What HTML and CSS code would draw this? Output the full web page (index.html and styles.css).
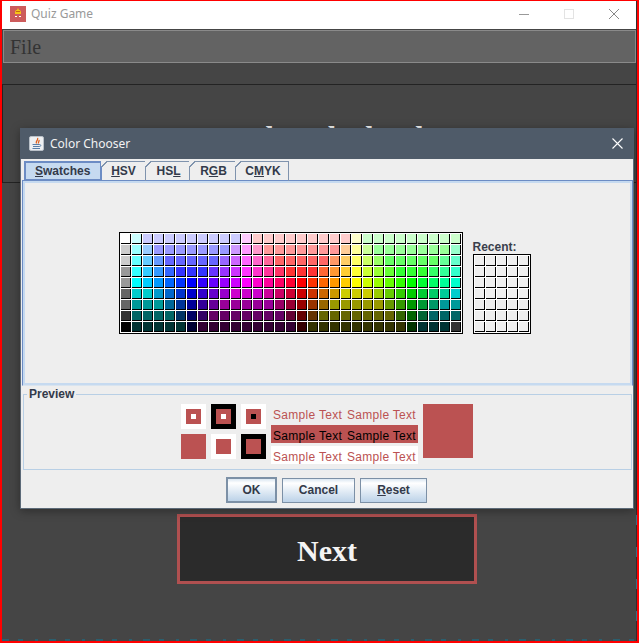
FILE: index.html
```html
<!DOCTYPE html>
<html lang="en">
<head>
    <meta charset="UTF-8">
    <title>Quiz Game</title>
    <link rel="stylesheet" href="styles.css">
</head>
<body>
<div class="screen">
    <div class="window">
        <div class="titlebar">
            <svg class="app_icon" width="16" height="16" viewBox="0 0 16 16">
                <rect width="16" height="16" fill="#cd5c5c"/>
                <path d="M5 6 L6 4 L7 4 L8 2 L9 4 L10 4 L11 6 L11 8 L5 8 Z" fill="#f5c518"/>
                <rect x="6" y="5" width="4" height="1" fill="#c46a10"/>
                <rect x="5" y="10" width="2" height="1" fill="#fff"/>
                <rect x="9" y="10" width="2" height="1" fill="#fff"/>
            </svg>
            <span class="app_name">Quiz Game</span>
            <div class="win_buttons">
                <svg width="12" height="12" viewBox="0 0 12 12"><path d="M1 6.5 H11" stroke="#999" fill="none"/></svg>
                <svg width="12" height="12" viewBox="0 0 12 12"><rect x="1.5" y="1.5" width="9" height="9" stroke="#e3e3e3" fill="none"/></svg>
                <svg width="12" height="12" viewBox="0 0 12 12"><path d="M1 1 L11 11 M11 1 L1 11" stroke="#888" fill="none"/></svg>
            </div>
        </div>
        <div class="menubar"><span class="menu_item">File</span></div>
        <div class="level_panel">
            <h1 class="level_title">Select the level</h1>
        </div>
        <div class="next_row">
            <button class="next_btn" type="button">Next</button>
        </div>
        <div class="clipped_bottom"></div>
        <div class="clipped_right"></div>
    </div>

    <div class="dialog">
        <div class="dialog_title">
            <svg class="java_icon" width="15" height="15" viewBox="0 0 15 15">
                <rect x="0.5" y="0.5" width="14" height="14" rx="1.5" fill="#eef0f2" stroke="#b9c0c8"/>
                <path d="M8.5 2 C10 4 6 5 7.5 7.5 M10 4 C10.5 5.5 9 6 9.5 7.5" stroke="#e0601c" stroke-width="1.3" fill="none"/>
                <path d="M3.5 8.5 H10 M4 10.5 H10 M3.5 12.5 H11 M10 8.5 C12.5 8.5 12.5 10.5 10 10.5" stroke="#5a7fa8" fill="none"/>
            </svg>
            <span class="dialog_name">Color Chooser</span>
            <svg class="dialog_close" width="11" height="11" viewBox="0 0 11 11"><path d="M0.5 0.5 L10.5 10.5 M10.5 0.5 L0.5 10.5" stroke="#fff" stroke-width="1.1" fill="none"/></svg>
        </div>
        <div class="tabs">
            <div class="tab tab_selected"><u>S</u>watches</div>
            <div class="tab tab_hsv"><u>H</u>SV</div>
            <div class="tab tab_hsl">HS<u>L</u></div>
            <div class="tab tab_rgb">R<u>G</u>B</div>
            <div class="tab tab_cmyk">C<u>M</u>YK</div>
        </div>
        <div class="tab_panel">
            <div class="swatch_area">
                <div class="swatch_grid" id="main_swatches"></div>
                <div class="recent">
                    <div class="recent_label">Recent:</div>
                    <div class="swatch_grid recent_grid" id="recent_swatches"></div>
                </div>
            </div>
        </div>
        <fieldset class="preview">
            <legend>Preview</legend>
            <div class="preview_row">
                <div class="chips">
                    <div class="chip chip_white"><div class="chip_in"><div class="chip_dot"></div></div></div>
                    <div class="chip chip_black"><div class="chip_in"><div class="chip_dot"></div></div></div>
                    <div class="chip chip_white"><div class="chip_in"><div class="chip_dot dot_black"></div></div></div>
                    <div class="chip chip_solid"></div>
                    <div class="chip chip_white"><div class="chip_in"></div></div>
                    <div class="chip chip_black"><div class="chip_in"></div></div>
                </div>
                <div class="samples">
                    <div class="sample"><span>Sample Text</span><span>Sample Text</span></div>
                    <div class="sample sample_fill"><span>Sample Text</span><span>Sample Text</span></div>
                    <div class="sample sample_white"><span>Sample Text</span><span>Sample Text</span></div>
                </div>
                <div class="big_color"></div>
            </div>
        </fieldset>
        <div class="dialog_buttons">
            <button class="btn btn_default" type="button">OK</button>
            <button class="btn btn_cancel" type="button">Cancel</button>
            <button class="btn btn_reset" type="button"><u>R</u>eset</button>
        </div>
    </div>
</div>
<script src="script.js"></script>
</body>
</html>
```

FILE: styles.css
```css
* {
    box-sizing: border-box;
}
body {
    margin: 0;
    background-color: #454545;
}
.screen {
    position: relative;
    width: 639px;
    height: 643px;
    overflow: hidden;
    border-style: solid;
    border-color: red;
    border-width: 1px 2px 2px 2px;
}
.window {
    position: relative;
    display: flex;
    flex-direction: column;
    height: 100%;
    background-color: #454545;
    border-right: 1px solid #2e2e2e;
}

/* window title */
.titlebar {
    display: flex;
    align-items: center;
    height: 28px;
    padding: 0 0 3px 8px;
    background-color: white;
    font-family: "Noto Sans", sans-serif;
    font-size: 12px;
}
.app_name {
    margin-left: 5px;
    color: #999;
}
.win_buttons {
    display: flex;
    gap: 33px;
    margin-left: auto;
    margin-right: 16px;
}

/* menu */
.menubar {
    display: flex;
    align-items: center;
    height: 33px;
    margin: 1px 0 0 1px;
    padding: 2px 0 0 6px;
    background-color: #636363;
    border: 1px solid #8a8a8a;
}
.menu_item {
    font-family: "Liberation Serif", serif;
    font-size: 20px;
    color: #333;
}

/* stuff under the dialog */
.level_panel {
    height: 99px;
    margin-top: 21px;
    padding: 32px 0 0 20px;
    border: 1px solid #232323;
    border-right: 0;
    text-align: center;
}
.level_title {
    margin: 0;
    font-family: "Liberation Serif", serif;
    font-size: 30px;
    line-height: 40px;
    color: #eee;
}
.next_row {
    padding: 331px 0 0 175px;
}
.next_btn {
    display: block;
    width: 300px;
    height: 70px;
    padding: 3px 0 0 0;
    background-color: #2b2b2b;
    border: 3px solid #b05050;
    font-family: "Liberation Serif", serif;
    font-weight: bold;
    font-size: 30px;
    color: #f4f4f4;
}
.clipped_bottom {
    position: absolute;
    left: 0;
    right: 0;
    bottom: 0;
    height: 2px;
    background: repeating-linear-gradient(90deg, #2a5f6e 0 7px, #454545 7px 16px, #2a5f6e 16px 21px, #454545 21px 33px, #2a5f6e 33px 36px, #454545 36px 47px);
}
.clipped_right {
    position: absolute;
    right: -1px;
    top: 514px;
    width: 1px;
    height: 106px;
    background: repeating-linear-gradient(180deg, #2e7486 0 10px, #2e2e2e 10px 32px);
}

/* dialog */
.dialog {
    position: absolute;
    left: 18px;
    top: 127px;
    width: 614px;
    height: 381px;
    background-color: #eee;
    border: 1px solid #5c6a78;
    box-shadow: 0 2px 9px rgba(0, 0, 0, 0.35);
    font-family: "Liberation Sans", sans-serif;
    font-size: 12px;
}
.dialog_title {
    display: flex;
    align-items: center;
    height: 31px;
    margin: -1px -1px 0 -1px;
    padding: 0 11px 0 9px;
    background-color: #4f5b69;
}
.dialog_name {
    margin-left: 6px;
    font-family: "Noto Sans", sans-serif;
    font-size: 12px;
    color: #f2f2f2;
}
.dialog_close {
    margin-left: auto;
}
.tabs {
    display: flex;
    height: 21px;
    margin-top: 2px;
    padding-left: 3px;
}
.tab {
    position: relative;
    height: 20px;
    line-height: 19px;
    text-align: center;
    font-weight: bold;
    color: #333a4a;
    border: 1px solid #7f93ad;
    border-bottom: 0;
    border-left: 0;
}
.tab_hsv {
    width: 44px;
}
.tab_hsl {
    width: 44px;
    padding-left: 2px;
}
.tab_rgb {
    width: 46px;
    padding-left: 2px;
}
.tab_cmyk {
    width: 53px;
    padding-left: 2px;
}
.tab::before {
    content: "";
    position: absolute;
    left: -1px;
    top: -1px;
    width: 6px;
    height: 6px;
    background: linear-gradient(135deg, #eee 42%, #7f93ad 42%, #7f93ad 60%, transparent 60%);
}
.tab_selected {
    width: 78px;
    height: 20px;
    padding: 0 0 0 9px;
    line-height: 16px;
    text-align: left;
    background-color: #c6daf0;
    border: 2px solid #6c8cc4;
}
.tab_selected::before {
    display: none;
}
.tab_panel {
    height: 206px;
    margin: -2px 0 0 1px;
    width: 611px;
    padding: 3px;
    background-color: #eee;
    border-top: 1px solid #6c8cc4;
    border-left: 1px solid #6c8cc4;
    border-right: 1px solid #6c8cc4;
    border-bottom: 1px solid #d9e4ef;
    box-shadow: inset 0 0 0 2px #c6daf0;
}
.swatch_area {
    display: flex;
    align-items: flex-end;
    justify-content: center;
    gap: 10px;
    height: 150px;
    padding-right: 6px;
}
.swatch_grid {
    display: grid;
    grid-template-columns: repeat(31, 10px);
    grid-auto-rows: 10px;
    gap: 1px;
    padding: 1px;
    background-color: white;
    border: 1px solid black;
}
.recent_grid {
    grid-template-columns: repeat(5, 10px);
}
.swatch {
    border-right: 1px solid black;
    border-bottom: 1px solid black;
}
.recent_label {
    font-weight: bold;
    line-height: 14px;
    color: #3a3f4c;
}

/* preview */
.preview {
    height: 82px;
    margin: 2px 0 0 2px;
    width: 609px;
    padding: 0;
    border: 1px solid #b8cfe5;
}
.preview legend {
    margin-left: 3px;
    padding: 0 2px;
    font-weight: bold;
    line-height: 13px;
    color: #333a4a;
}
.preview_row {
    display: flex;
    align-items: flex-start;
    margin: 3px 0 0 157px;
}
.chips {
    display: grid;
    grid-template-columns: repeat(3, 25px);
    grid-auto-rows: 25px;
    gap: 5px;
}
.chip {
    display: flex;
    align-items: center;
    justify-content: center;
}
.chip_white {
    background-color: white;
}
.chip_black {
    background-color: black;
}
.chip_solid {
    background-color: #bb5252;
}
.chip_in {
    display: flex;
    align-items: center;
    justify-content: center;
    width: 15px;
    height: 15px;
    background-color: #bb5252;
}
.chip_dot {
    width: 5px;
    height: 5px;
    background-color: white;
}
.dot_black {
    background-color: black;
}
.samples {
    display: flex;
    flex-direction: column;
    gap: 3px;
    width: 147px;
    margin-left: 5px;
}
.sample {
    display: flex;
    justify-content: space-between;
    height: 18px;
    padding: 0 2px;
    line-height: 22px;
    letter-spacing: 0.3px;
    color: #bb5252;
}
.sample_fill {
    background-color: #bb5252;
    color: black;
}
.sample_white {
    background-color: white;
}
.big_color {
    width: 50px;
    height: 54px;
    margin-left: 5px;
    background-color: #bb5252;
}

/* buttons */
.dialog_buttons {
    display: flex;
    align-items: center;
    gap: 5px;
    margin: 7px 0 0 205px;
}
.btn {
    height: 25px;
    padding: 0;
    font-family: "Liberation Sans", sans-serif;
    font-weight: bold;
    font-size: 12px;
    color: #333a4a;
    background: linear-gradient(#dbe7f2, #ffffff 18%, #bcd2e8);
    border: 1px solid #7c90a6;
}
.btn_default {
    width: 51px;
    height: 26px;
    border-width: 2px;
}
.btn_cancel {
    width: 73px;
}
.btn_reset {
    width: 67px;
}
```

FILE: script.js
```js
// Swatch colours, one string per row, "x5" means repeat five times
var rows = [
    "fff cff ccfx9 fcf fccx9 ffc cfcx9",
    "ccc 9ff 9cf 99fx7 c9f f9f f9c f99x7 fc9 ff9 cf9 9f9x7 9fc",
    "ccc 6ff 6cf 69f 66fx5 96f c6f f6f f6c f69 f66x5 f96 fc6 ff6 cf6 9f6 6f6x5 6f9 6fc",
    "999 3ff 3cf 39f 36f 33fx3 63f 93f c3f f3f f3c f39 f36 f33x3 f63 f93 fc3 ff3 cf3 9f3 6f3 3f3x3 3f6 3f9 3fc",
    "999 0ff 0cf 09f 06f 03f 00f 30f 60f 90f c0f f0f f0c f09 f06 f03 f00 f30 f60 f90 fc0 ff0 cf0 9f0 6f0 3f0 0f0 0f3 0f6 0f9 0fc",
    "666 0ccx2 09c 06c 03c 00c 30c 60c 90c c0cx3 c09 c06 c03 c00 c30 c60 c90 cc0x3 9c0 6c0 3c0 0c0 0c3 0c6 0c9 0cc",
    "666 099x3 069 039 009 309 609 909x5 906 903 900 930 960 990x5 690 390 090 093 096 099x2",
    "333 066x4 036 006 306 606x7 603 600 630 660x7 360 060 063 066x3",
    "000 033x5 003 303x9 300 330x9 030 033x3 333"
];

function AddSwatch(box, color) {
    var cell = document.createElement('div');
    cell.className = 'swatch';
    cell.style.backgroundColor = color;
    box.appendChild(cell);
}

var main_box = document.getElementById('main_swatches');
rows.forEach(function (row) {
    row.split(' ').forEach(function (item) {
        var parts = item.split('x');
        var times = parts[1] ? parseInt(parts[1]) : 1;
        for (var i = 0; i < times; i++) {
            AddSwatch(main_box, '#' + parts[0]);
        }
    });
});

var recent_box = document.getElementById('recent_swatches');
for (var i = 0; i < 35; i++) {
    AddSwatch(recent_box, '#eeeeee');
}
```
